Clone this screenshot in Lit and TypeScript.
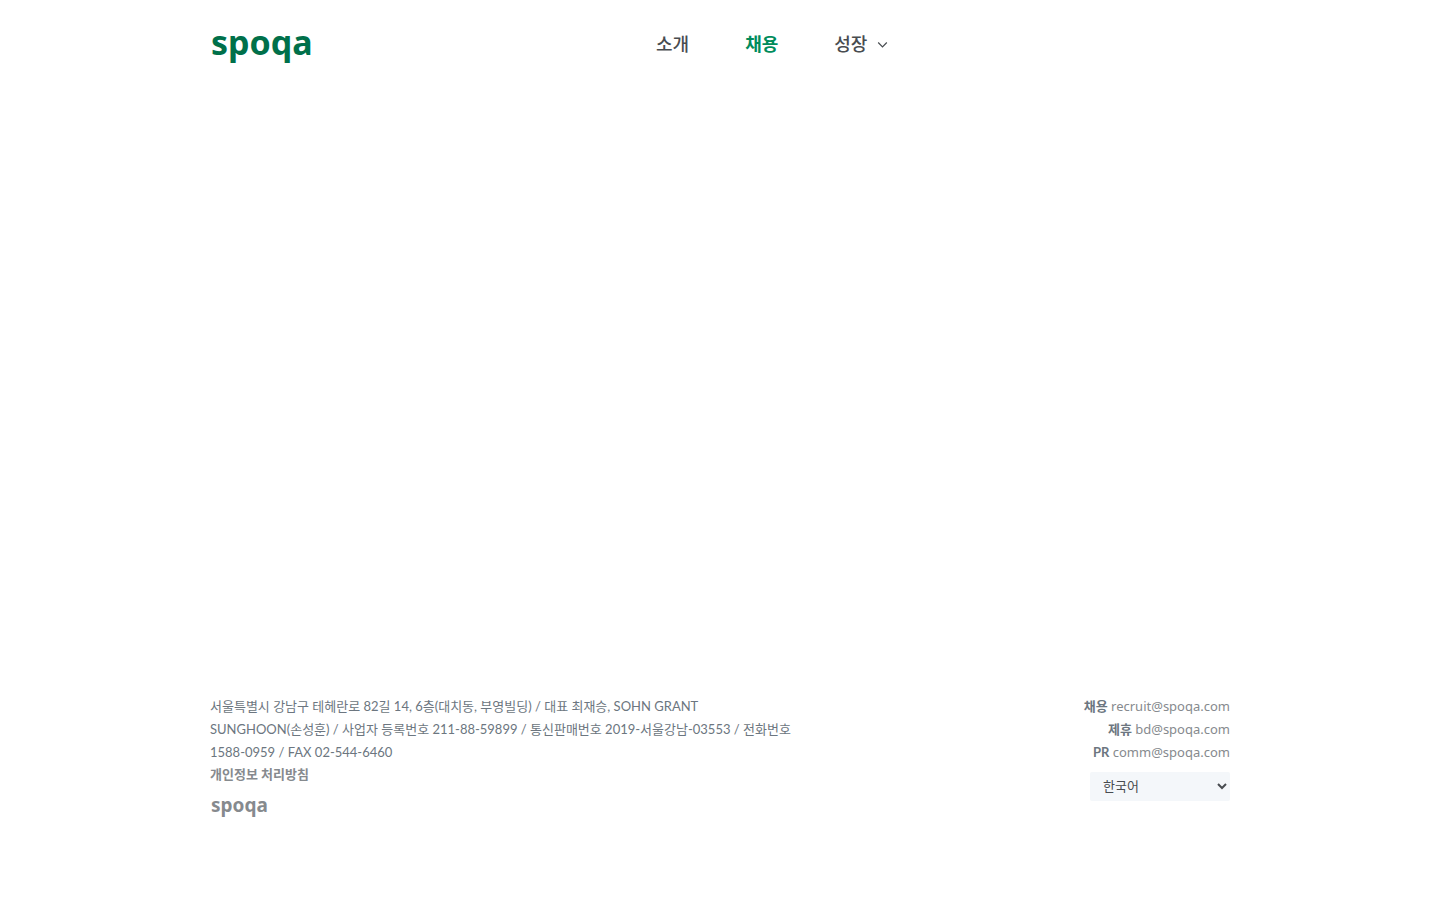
import { LitElement, html, css } from "lit";
import { customElement } from "lit/decorators.js";

interface Contact {
  label: string;
  email: string;
}

const CONTACTS: Contact[] = [
  { label: "채용", email: "recruit@spoqa.com" },
  { label: "제휴", email: "bd@spoqa.com" },
  { label: "PR", email: "comm@spoqa.com" },
];

@customElement("site-header")
export class SiteHeader extends LitElement {
  static styles = css`
    :host {
      display: block;
    }
    .bar {
      box-sizing: border-box;
      max-width: 1020px;
      height: 88px;
      margin: 0 auto;
      display: grid;
      grid-template-columns: 446px auto;
      align-items: center;
    }
    a {
      color: inherit;
      text-decoration: none;
    }
    .logo {
      padding: 0 0 4px 1px;
      font: 700 34px/48px "Noto Sans", sans-serif;
      color: #00704a;
    }
    .menu {
      display: flex;
      align-items: center;
      gap: 56px;
      margin: 0;
      padding: 0;
      list-style: none;
      font-size: 18px;
      line-height: 28px;
      font-weight: 500;
      color: #484c50;
    }
    .current {
      font-weight: 700;
      color: #008c5c;
    }
    .drop {
      display: flex;
      align-items: center;
      gap: 10px;
      padding: 0;
      border: 0;
      background: none;
      font: inherit;
      color: inherit;
    }
    .chevron {
      width: 11px;
      height: 8px;
      fill: none;
      stroke: currentColor;
      stroke-width: 1.2;
    }
  `;

  render() {
    return html`
      <header class="bar">
        <a class="logo" href="#">spoqa</a>
        <nav>
          <ul class="menu">
            <li><a href="#about">소개</a></li>
            <li><a class="current" href="#jobs" aria-current="page">채용</a></li>
            <li>
              <button class="drop" type="button">
                성장
                <svg class="chevron" viewBox="0 0 11 8" aria-hidden="true">
                  <path d="M1.2 2.5 5.5 6.8 9.8 2.5" />
                </svg>
              </button>
            </li>
          </ul>
        </nav>
      </header>
    `;
  }
}

@customElement("site-footer")
export class SiteFooter extends LitElement {
  static styles = css`
    :host {
      display: block;
      padding-bottom: 80px;
    }
    .columns {
      max-width: 1020px;
      margin: 0 auto;
      display: flex;
      justify-content: space-between;
      font-size: 13px;
      line-height: 23px;
      color: #6c7680;
    }
    p {
      margin: 0;
    }
    a {
      color: #868a8e;
      text-decoration: none;
    }
    .policy {
      display: block;
      line-height: 20px;
      font-weight: 700;
    }
    .mark {
      display: block;
      margin-top: 6px;
      padding-left: 1px;
      font: 700 19px/30px "Noto Sans", sans-serif;
    }
    .contacts {
      display: flex;
      flex-direction: column;
      align-items: flex-end;
    }
    .mail {
      font-family: "Noto Sans", sans-serif;
    }
    .language {
      box-sizing: border-box;
      width: 140px;
      height: 29px;
      margin-top: 8px;
      padding: 0 2px 2px 9px;
      border: 0;
      border-radius: 2px;
      background-color: #f4f7fa;
      font: inherit;
      color: #484c50;
    }
  `;

  render() {
    return html`
      <footer class="columns">
        <div>
          <p>
            서울특별시 강남구 테헤란로 82길 14, 6층(대치동, 부영빌딩) / 대표 최재승, SOHN GRANT<br />
            SUNGHOON(손성훈) / 사업자 등록번호 211-88-59899 / 통신판매번호 2019-서울강남-03553 / 전화번호<br />
            1588-0959 / FAX 02-544-6460
          </p>
          <a class="policy" href="#privacy">개인정보 처리방침</a>
          <a class="mark" href="#">spoqa</a>
        </div>
        <div class="contacts">
          ${CONTACTS.map(
            (c) => html`<p><b>${c.label}</b> <a class="mail" href="mailto:${c.email}">${c.email}</a></p>`
          )}
          <select class="language" aria-label="언어">
            <option selected>한국어</option>
            <option>English</option>
            <option>日本語</option>
          </select>
        </div>
      </footer>
    `;
  }
}

@customElement("app-root")
export class AppRoot extends LitElement {
  static styles = css`
    :host {
      display: flex;
      flex-direction: column;
      min-height: 100vh;
      background: #fff;
      font-family: Lato, "Noto Sans CJK KR", sans-serif;
    }
    main {
      flex: 1;
    }
  `;

  render() {
    return html`
      <site-header></site-header>
      <main></main>
      <site-footer></site-footer>
    `;
  }
}
